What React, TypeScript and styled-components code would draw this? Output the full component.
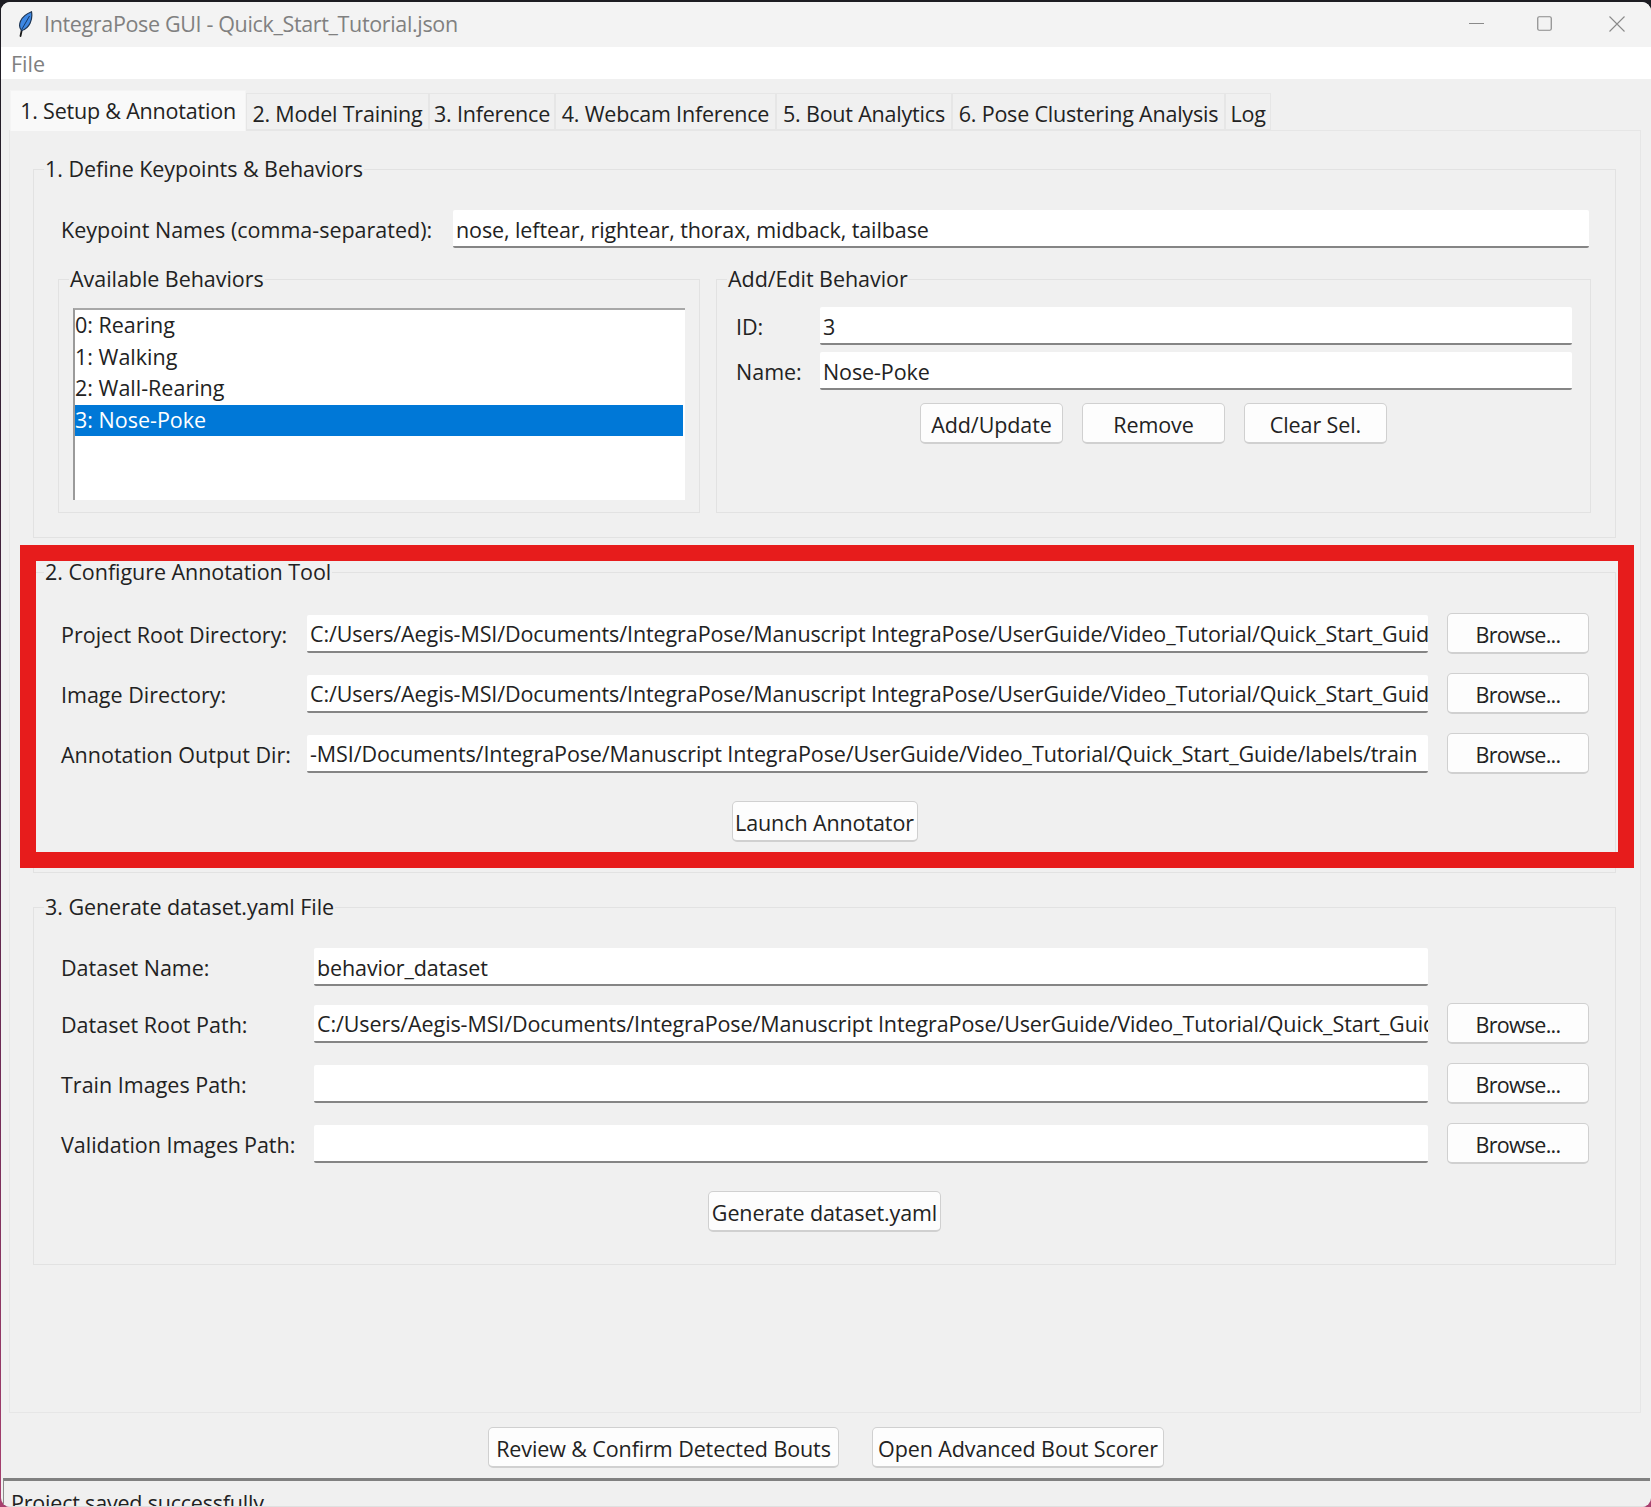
import styled, { createGlobalStyle } from 'styled-components'

const FONT = `"Open Sans", "Noto Sans", "Liberation Sans", sans-serif`

const GlobalStyle = createGlobalStyle`
  html, body {
    margin: 0;
    padding: 0;
    background: linear-gradient(180deg, #1c1c22 0%, #3b2238 30%, #6e2a55 70%, #a8406f 100%);
  }
  body {
    width: 1651px;
    height: 1507px;
    overflow: hidden;
  }
  * {
    box-sizing: border-box;
  }
`

const Window = styled.div`
  background: #f0f0f0;
  border-radius: 9px;
  color: #222;
  display: flex;
  flex-direction: column;
  font-family: ${FONT};
  font-size: 21.5px;
  height: 1505px;
  margin: 2px 0 0 1px;
  overflow: hidden;
  width: 1650px;
`

const TitleBar = styled.div`
  align-items: center;
  background: #f3f3f3;
  color: #808080;
  display: flex;
  flex: 0 0 45px;
  letter-spacing: -0.35px;
  padding: 0 26px 2px 16px;
`

const TitleText = styled.span`
  flex: 1;
  margin-left: 11px;
`

const WinButtons = styled.div`
  align-items: center;
  color: #8a8a8a;
  display: flex;
  gap: 53px;
`

const CloseSvg = styled.svg`
  margin-left: 4px;
`

const MenuBar = styled.div`
  align-items: center;
  background: #fff;
  color: #808080;
  display: flex;
  flex: 0 0 32px;
  padding-left: 10px;
`

const TabBar = styled.div`
  align-items: flex-end;
  display: flex;
  height: 41px;
  letter-spacing: -0.2px;
  margin: 11px 0 -1px 9px;
  position: relative;
  z-index: 1;
`

const Tab = styled.div<{ $active?: boolean; $width: number }>`
  align-items: center;
  background: ${({ $active }) => ($active ? '#f9f9f9' : '#f0f0f0')};
  border: 1px solid ${({ $active }) => ($active ? '#f4f4f4' : '#e6e6e6')};
  border-bottom: ${({ $active }) => ($active ? 'none' : '1px solid #e6e6e6')};
  display: flex;
  height: ${({ $active }) => ($active ? '41px' : '37px')};
  justify-content: center;
  margin-bottom: ${({ $active }) => ($active ? '0' : '1px')};
  padding-bottom: ${({ $active }) => ($active ? '2px' : '0')};
  padding-top: ${({ $active }) => ($active ? '0' : '3px')};
  white-space: nowrap;
  width: ${({ $width }) => $width}px;
`

const Notebook = styled.div`
  border: 1px solid #e6e6e6;
  flex: 0 0 1283px;
  margin: 0 10px 0 8px;
  padding: 23px 24px 0 23px;
`

const Group = styled.fieldset<{ $top?: number; $bottom?: number }>`
  border: 1px solid #e2e2e2;
  margin: ${({ $top }) => $top || 0}px 0 0;
  min-width: 0;
  padding: 0 24px ${({ $bottom }) => $bottom || 24}px;
`

const GroupTitle = styled.legend`
  letter-spacing: -0.05px;
  line-height: 30px;
  margin-left: -14px;
  padding: 0 1px;
  white-space: nowrap;
`

const SubGroupTitle = styled(GroupTitle)`
  margin-left: 10px;
`

const Highlight = styled.div`
  border: 16px solid #e71c1c;
  height: 323px;
  left: -13px;
  pointer-events: none;
  position: absolute;
  top: -12px;
  width: 1614px;
`

const HighlightWrap = styled.div`
  margin-top: 19px;
  position: relative;
`

const Row = styled.div<{ $top?: number; $height?: number }>`
  align-items: center;
  display: flex;
  gap: 19px;
  height: ${({ $height }) => $height || 41}px;
  margin-top: ${({ $top }) => $top ?? 19}px;
  padding: 0 2px 0 3px;
`

const Label = styled.label<{ $width: number; $inRow?: boolean }>`
  flex: 0 0 ${({ $width }) => $width}px;
  margin-right: ${({ $inRow }) => ($inRow ? '0' : '-19px')};
  padding-top: 1px;
  white-space: nowrap;
`

const Input = styled.input`
  background: #fff;
  border: none;
  border-bottom: 2px solid #858585;
  border-radius: 2px;
  color: #222;
  flex: 1;
  font: inherit;
  height: 38px;
  letter-spacing: -0.1px;
  min-width: 0;
  outline: none;
  padding: 2px 0 0 3px;
`

const Spacer = styled.div`
  flex: 0 0 142px;
`

const Button = styled.button<{ $width: number }>`
  background: #fdfdfd;
  border: 1px solid #d0d0d0;
  border-bottom-width: 2px;
  border-radius: 5px;
  color: #222;
  flex: 0 0 ${({ $width }) => $width}px;
  font: inherit;
  height: 41px;
  letter-spacing: -0.1px;
  padding: 2px 0 0;
  white-space: nowrap;
  width: ${({ $width }) => $width}px;
`

const BrowseButton = styled(Button)`
  letter-spacing: -0.75px;
`

const ButtonRow = styled.div<{ $top: number; $gap?: number }>`
  display: flex;
  gap: ${({ $gap }) => $gap || 0}px;
  justify-content: center;
  margin-top: ${({ $top }) => $top}px;
`

const SubGroups = styled.div`
  display: flex;
  gap: 16px;
  margin-top: 16px;
`

const SubGroup = styled.fieldset<{ $width?: number }>`
  border: 1px solid #e2e2e2;
  flex: ${({ $width }) => ($width ? `0 0 ${$width}px` : '1')};
  margin: 0;
  min-width: 0;
  padding: 0;
`

const ListBox = styled.ul`
  background: #fff;
  border-left: 2px solid #9a9a9a;
  border-top: 2px solid #a8a8a8;
  height: 192px;
  list-style: none;
  margin: 14px 14px 12px;
  padding: 0 2px 0 0;
`

const ListItem = styled.li<{ $selected?: boolean }>`
  background: ${({ $selected }) => ($selected ? '#0078d7' : 'transparent')};
  color: ${({ $selected }) => ($selected ? '#fff' : '#222')};
  height: 31.5px;
  line-height: 29.5px;
`

const EditFields = styled.div`
  display: flex;
  flex-direction: column;
  gap: 7px;
  padding: 13px 18px 0 19px;
`

const EditRow = styled.div`
  align-items: center;
  display: flex;
  height: 38px;
`

const BottomBar = styled.div`
  display: flex;
  gap: 33px;
  justify-content: center;
  margin-top: 14px;
`

const StatusBar = styled.div`
  border-bottom: 1px solid #e0e0e0;
  border-left: 1px solid #8a8a8a;
  border-top: 3px solid #808080;
  flex: 1;
  letter-spacing: -0.2px;
  line-height: 30px;
  margin: 10px 1px 0 2px;
  overflow: hidden;
  padding: 7px 0 0 7px;
  white-space: nowrap;
`

const Feather = () => (
  <svg width="16" height="26" viewBox="0 0 16 26" fill="none">
    <path d="M3.5 25 L5 18" stroke="#1a1a1a" strokeWidth="1.8" strokeLinecap="round" />
    <path
      d="M4.6 19.5 C0.5 15 2.5 5.5 14.5 0.8 C15.8 8 13 17 4.6 19.5 Z"
      fill="#3d87e2"
      stroke="#1d3554"
      strokeWidth="1.2"
    />
    <path d="M5 18 L12.5 5" stroke="#123058" strokeWidth="0.9" />
  </svg>
)

const MinimizeIcon = () => (
  <svg width="15" height="15" viewBox="0 0 15 15">
    <path d="M0 7.5 H15" stroke="currentColor" strokeWidth="1" />
  </svg>
)

const MaximizeIcon = () => (
  <svg width="15" height="15" viewBox="0 0 15 15" fill="none">
    <rect x="0.75" y="0.75" width="13.5" height="13.5" rx="1.5" stroke="currentColor" strokeWidth="1.2" />
  </svg>
)

const CloseIcon = () => (
  <CloseSvg width="16" height="16" viewBox="0 0 16 16" fill="none">
    <path d="M0.5 0.5 L15.5 15.5 M15.5 0.5 L0.5 15.5" stroke="currentColor" strokeWidth="1.1" />
  </CloseSvg>
)

const tabs = [
  { label: '1. Setup & Annotation', width: 236 },
  { label: '2. Model Training', width: 183 },
  { label: '3. Inference', width: 126 },
  { label: '4. Webcam Inference', width: 221 },
  { label: '5. Bout Analytics', width: 176 },
  { label: '6. Pose Clustering Analysis', width: 273 },
  { label: 'Log', width: 46 },
]

const behaviors = ['0: Rearing', '1: Walking', '2: Wall-Rearing', '3: Nose-Poke']

const ROOT =
  'C:/Users/Aegis-MSI/Documents/IntegraPose/Manuscript IntegraPose/UserGuide/Video_Tutorial/Quick_Start_Guide'

const PathRow = ({ label, value, width, top }: { label: string; value?: string; width: number; top?: number }) => (
  <Row $top={top}>
    <Label $width={width}>{label}</Label>
    <Input readOnly value={value || ''} />
    <BrowseButton $width={142}>Browse...</BrowseButton>
  </Row>
)

const App = () => (
  <Window>
    <GlobalStyle />
    <TitleBar>
      <Feather />
      <TitleText>IntegraPose GUI - Quick_Start_Tutorial.json</TitleText>
      <WinButtons>
        <MinimizeIcon />
        <MaximizeIcon />
        <CloseIcon />
      </WinButtons>
    </TitleBar>
    <MenuBar>File</MenuBar>
    <TabBar>
      {tabs.map((tab, i) => (
        <Tab key={tab.label} $active={i === 0} $width={tab.width}>
          {tab.label}
        </Tab>
      ))}
    </TabBar>
    <Notebook>
      <Group>
        <GroupTitle>1. Define Keypoints &amp; Behaviors</GroupTitle>
        <Row $top={26} $height={38}>
          <Label $width={392}>Keypoint Names (comma-separated):</Label>
          <Input readOnly value="nose, leftear, rightear, thorax, midback, tailbase" />
        </Row>
        <SubGroups>
          <SubGroup $width={642}>
            <SubGroupTitle>Available Behaviors</SubGroupTitle>
            <ListBox>
              {behaviors.map((b, i) => (
                <ListItem key={b} $selected={i === 3}>
                  {b}
                </ListItem>
              ))}
            </ListBox>
          </SubGroup>
          <SubGroup>
            <SubGroupTitle>Add/Edit Behavior</SubGroupTitle>
            <EditFields>
              <EditRow>
                <Label $width={84} $inRow>ID:</Label>
                <Input readOnly value="3" />
              </EditRow>
              <EditRow>
                <Label $width={84} $inRow>Name:</Label>
                <Input readOnly value="Nose-Poke" />
              </EditRow>
            </EditFields>
            <ButtonRow $top={13} $gap={19}>
              <Button $width={143}>Add/Update</Button>
              <Button $width={143}>Remove</Button>
              <Button $width={143}>Clear Sel.</Button>
            </ButtonRow>
          </SubGroup>
        </SubGroups>
      </Group>

      <HighlightWrap>
        <Group $bottom={30}>
          <GroupTitle>2. Configure Annotation Tool</GroupTitle>
          <PathRow top={26} label="Project Root Directory:" width={246} value={ROOT} />
          <PathRow label="Image Directory:" width={246} value={ROOT} />
          <PathRow
            label="Annotation Output Dir:"
            width={246}
            value="-MSI/Documents/IntegraPose/Manuscript IntegraPose/UserGuide/Video_Tutorial/Quick_Start_Guide/labels/train"
          />
          <ButtonRow $top={27}>
            <Button $width={186}>Launch Annotator</Button>
          </ButtonRow>
        </Group>
        <Highlight />
      </HighlightWrap>

      <Group $top={19} $bottom={32}>
        <GroupTitle>3. Generate dataset.yaml File</GroupTitle>
        <Row $top={26} $height={38}>
          <Label $width={253}>Dataset Name:</Label>
          <Input readOnly value="behavior_dataset" />
          <Spacer />
        </Row>
        <PathRow top={17} label="Dataset Root Path:" width={253} value={ROOT} />
        <PathRow label="Train Images Path:" width={253} />
        <PathRow label="Validation Images Path:" width={253} />
        <ButtonRow $top={27}>
          <Button $width={233}>Generate dataset.yaml</Button>
        </ButtonRow>
      </Group>
    </Notebook>
    <BottomBar>
      <Button $width={351}>Review &amp; Confirm Detected Bouts</Button>
      <Button $width={292}>Open Advanced Bout Scorer</Button>
    </BottomBar>
    <StatusBar>Project saved successfully.</StatusBar>
  </Window>
)

export default App
